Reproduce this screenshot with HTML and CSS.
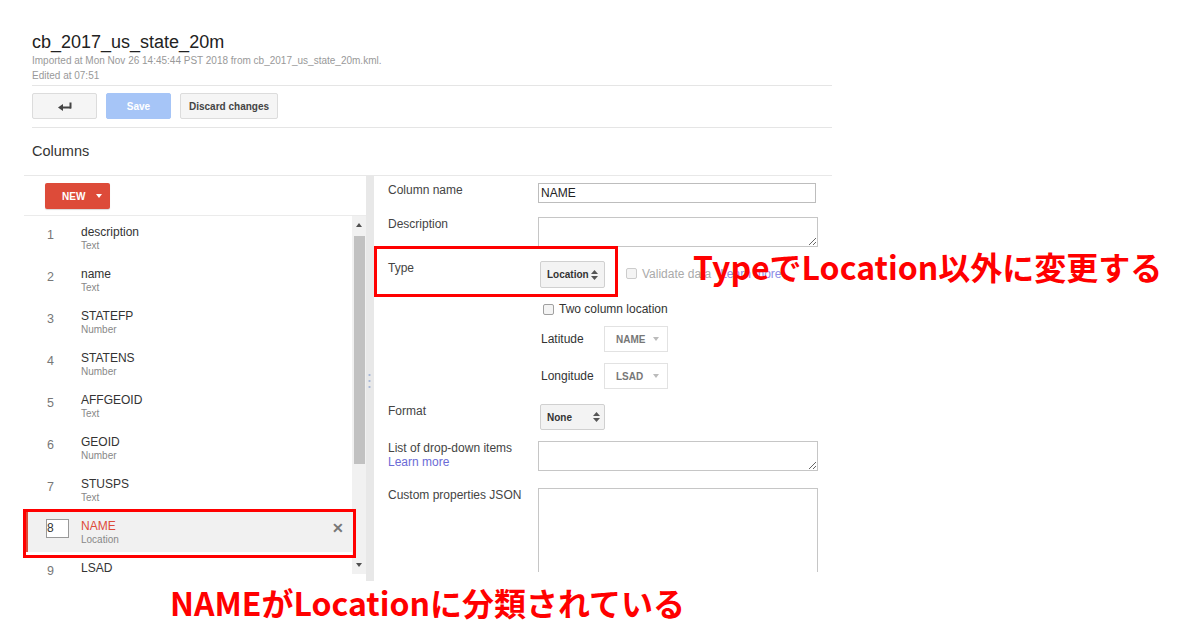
FILE: index.html
```html
<!DOCTYPE html>
<html lang="en">
<head>
  <meta charset="UTF-8" />
  <title>cb_2017_us_state_20m - Columns</title>
  <link rel="stylesheet" href="styles.css">
</head>
<body>
  <div class="page">
    <div class="doc-head">
      <h1>cb_2017_us_state_20m</h1>
      <p class="meta">Imported at Mon Nov 26 14:45:44 PST 2018 from cb_2017_us_state_20m.kml.</p>
      <p class="meta">Edited at 07:51</p>
    </div>

    <div class="toolbar">
      <button class="btn back" title="Back">
        <svg width="14" height="10" viewBox="0 0 14 10">
          <path d="M0 6.5 L5 3 L5 10 Z" fill="#444"/>
          <rect x="4" y="5.5" width="9" height="2" fill="#444"/>
          <rect x="11.5" y="1.5" width="2" height="6" fill="#444"/>
        </svg>
      </button>
      <button class="btn save">Save</button>
      <button class="btn">Discard changes</button>
    </div>

    <div class="section-title">Columns</div>

    <div class="editor">
      <div class="col-list">
        <div class="list-top">
          <button class="new-btn">NEW <span class="caret"></span></button>
        </div>
        <div class="list-body">
          <ul class="rows">
            <li class="row"><span class="num">1</span><div class="info"><div class="name">description</div><div class="type">Text</div></div></li>
            <li class="row"><span class="num">2</span><div class="info"><div class="name">name</div><div class="type">Text</div></div></li>
            <li class="row"><span class="num">3</span><div class="info"><div class="name">STATEFP</div><div class="type">Number</div></div></li>
            <li class="row"><span class="num">4</span><div class="info"><div class="name">STATENS</div><div class="type">Number</div></div></li>
            <li class="row"><span class="num">5</span><div class="info"><div class="name">AFFGEOID</div><div class="type">Text</div></div></li>
            <li class="row"><span class="num">6</span><div class="info"><div class="name">GEOID</div><div class="type">Number</div></div></li>
            <li class="row"><span class="num">7</span><div class="info"><div class="name">STUSPS</div><div class="type">Text</div></div></li>
            <li class="row active">
              <span class="num"><span class="num-box">8</span></span>
              <div class="info"><div class="name">NAME</div><div class="type">Location</div></div>
              <span class="remove">&#x2715;</span>
            </li>
            <li class="row"><span class="num">9</span><div class="info"><div class="name">LSAD</div></div></li>
          </ul>
          <div class="scrollbar">
            <span class="arrow up"></span>
            <div class="thumb"></div>
            <span class="arrow down"></span>
          </div>
        </div>
      </div>

      <div class="splitter"><span class="grip"></span></div>

      <div class="col-form">
        <div class="field f-name">
          <label class="field-label">Column name</label>
          <input class="text-input" type="text" value="NAME" />
        </div>
        <div class="field f-desc">
          <label class="field-label">Description</label>
          <textarea class="area"></textarea>
        </div>
        <div class="field f-type">
          <label class="field-label">Type</label>
          <div class="control-line">
            <span class="select">Location
              <svg width="7" height="10" viewBox="0 0 7 10"><path d="M0 4 L3.5 0 L7 4 Z M0 6 L3.5 10 L7 6 Z" fill="#555"/></svg>
            </span>
            <span class="check disabled"><span class="box"></span>Validate data</span>
            <a class="link" href="#">Learn more</a>
          </div>
        </div>
        <div class="field f-two">
          <span class="field-label"></span>
          <span class="check"><span class="box"></span>Two column location</span>
        </div>
        <div class="field f-lat">
          <span class="field-label"></span>
          <div class="sub-field">
            <span class="sub-label">Latitude</span>
            <span class="dropdown">NAME <span class="tri"></span></span>
          </div>
        </div>
        <div class="field f-lng">
          <span class="field-label"></span>
          <div class="sub-field">
            <span class="sub-label">Longitude</span>
            <span class="dropdown">LSAD <span class="tri"></span></span>
          </div>
        </div>
        <div class="field f-format">
          <label class="field-label">Format</label>
          <span class="select">None
            <svg width="7" height="10" viewBox="0 0 7 10"><path d="M0 4 L3.5 0 L7 4 Z M0 6 L3.5 10 L7 6 Z" fill="#555"/></svg>
          </span>
        </div>
        <div class="field f-list">
          <div class="field-label">List of drop-down items<br><a class="link" href="#">Learn more</a></div>
          <textarea class="area"></textarea>
        </div>
        <div class="field f-json">
          <label class="field-label">Custom properties JSON</label>
          <textarea class="area tall"></textarea>
        </div>
      </div>
    </div>

    <!-- annotations -->
    <div class="mark mark-row"></div>
    <div class="mark mark-type"></div>
    <div class="note note-type">TypeでLocation以外に変更する</div>
    <div class="note note-row">NAMEがLocationに分類されている</div>
  </div>
</body>
</html>
```

FILE: styles.css
```css
body {
  margin: 0;
  padding: 0;
  background: #fff;
  font-family: "Liberation Sans", Arial, sans-serif;
  color: #333;
}

.page {
  position: relative;
  padding-left: 24px;
  height: 637px;
  overflow: hidden;
}

/* header */
.doc-head {
  width: 800px;
  margin-left: 8px;
  padding-top: 31px;
  padding-bottom: 2px;
  border-bottom: 1px solid #e5e5e5;
}

h1 {
  margin: 0;
  font-size: 18px;
  font-weight: normal;
  line-height: 22px;
  color: #222;
}

.meta {
  margin: 0;
  font-size: 10px;
  line-height: 15px;
  color: #999;
}

.toolbar {
  width: 800px;
  margin-left: 8px;
  padding: 7px 0 8px;
  display: flex;
  gap: 9px;
  border-bottom: 1px solid #e5e5e5;
}

.btn {
  height: 26px;
  padding: 0 8px;
  border: 1px solid #dcdcdc;
  border-radius: 2px;
  background: #f5f5f5;
  color: #444;
  font-family: "Liberation Sans", Arial, sans-serif;
  font-size: 10px;
  font-weight: bold;
  cursor: pointer;
}

.btn.back {
  width: 65px;
  display: flex;
  align-items: center;
  justify-content: center;
}

.btn.save {
  width: 65px;
  background: #a6c5f7;
  border-color: #a6c5f7;
  color: #fff;
}

.section-title {
  margin-left: 8px;
  height: 47px;
  line-height: 47px;
  font-size: 14.5px;
  color: #333;
}

/* editor */
.editor {
  display: flex;
  width: 808px;
  height: 405px;
  border-top: 1px solid #e8e8e8;
}

.col-list {
  width: 342px;
}

.list-top {
  height: 40px;
  padding-left: 21px;
  padding-top: 7px;
  box-sizing: border-box;
  border-bottom: 1px solid #ebebeb;
}

.new-btn {
  width: 65px;
  height: 26px;
  padding: 0 0 0 17px;
  border: none;
  border-radius: 2px;
  background: #dd4b39;
  color: #fff;
  font-family: "Liberation Sans", Arial, sans-serif;
  font-size: 10px;
  font-weight: bold;
  box-shadow: 0 1px 1px rgba(0, 0, 0, 0.15);
  display: flex;
  align-items: center;
}

.new-btn .caret {
  margin-left: 11px;
  width: 0;
  height: 0;
  border-left: 3.5px solid transparent;
  border-right: 3.5px solid transparent;
  border-top: 4px solid #fff;
}

.list-body {
  display: flex;
  height: 362px;
  overflow: hidden;
}

.rows {
  list-style: none;
  margin: 0;
  padding: 0;
  width: 328px;
}

.row {
  display: flex;
  height: 42px;
  padding-top: 9px;
  box-sizing: border-box;
  position: relative;
}

.num {
  width: 34px;
  padding-left: 23px;
  padding-top: 3px;
  font-size: 12.5px;
  color: #777;
}

.name {
  font-size: 12px;
  line-height: 14px;
  color: #333;
}

.type {
  font-size: 10px;
  line-height: 14px;
  color: #888;
}

.row.active {
  background: #f1f1f1;
  box-shadow: inset 4px 0 #dd4b39;
}

.row.active .name {
  color: #dd4b39;
}

.row.active .num {
  padding-top: 0;
}

.num-box {
  display: inline-block;
  width: 21px;
  height: 17px;
  margin-left: -1px;
  border: 1px solid #999;
  background: #fff;
  font-size: 12px;
  line-height: 17px;
  color: #333;
}

.remove {
  position: absolute;
  right: 8px;
  top: 10px;
  font-size: 14px;
  font-weight: bold;
  color: #777;
}

.scrollbar {
  width: 14px;
  height: 358px;
  background: #f1f1f1;
  display: flex;
  flex-direction: column;
  align-items: center;
}

.scrollbar .arrow {
  width: 0;
  height: 0;
  border-left: 3.5px solid transparent;
  border-right: 3.5px solid transparent;
}

.scrollbar .up {
  margin-top: 7px;
  border-bottom: 4px solid #505050;
}

.scrollbar .down {
  margin-top: 99px;
  border-top: 4px solid #505050;
}

.scrollbar .thumb {
  width: 11px;
  height: 228px;
  margin-top: 9px;
  background: #c1c1c1;
}

.splitter {
  width: 8px;
  background: #e8e8e8;
  position: relative;
}

.splitter .grip {
  position: absolute;
  left: 2px;
  top: 196px;
  width: 3px;
  height: 16px;
  background-image: radial-gradient(circle, #a8b8d8 1px, transparent 1.2px);
  background-size: 3px 6px;
}

/* form */
.col-form {
  width: 444px;
  padding: 7px 0 0 14px;
  height: 396px;
  box-sizing: border-box;
  overflow: hidden;
}

.field {
  display: flex;
  align-items: flex-start;
}

.field-label {
  width: 150px;
  flex-shrink: 0;
  font-size: 12px;
  line-height: 14px;
  color: #444;
}

.text-input {
  width: 278px;
  height: 20px;
  box-sizing: border-box;
  margin: 0;
  padding: 1px 2px;
  border: 1px solid #bdbdbd;
  font-family: "Liberation Sans", Arial, sans-serif;
  font-size: 12px;
  color: #222;
}

.area {
  width: 280px;
  height: 30px;
  box-sizing: border-box;
  margin: 0;
  border: 1px solid #c6c6c6;
  font-family: "Liberation Sans", Arial, sans-serif;
}

.area.tall {
  height: 110px;
}

.f-name { margin-bottom: 14px; }
.f-desc { margin-bottom: 14px; }
.f-type { margin-bottom: 13px; }
.f-two { margin-bottom: 9px; }
.f-lat { margin-bottom: 11px; }
.f-lng { margin-bottom: 15px; }
.f-format { margin-bottom: 11px; }
.f-list { margin-bottom: 17px; }

.control-line {
  display: flex;
  align-items: center;
}

.select {
  display: inline-flex;
  align-items: center;
  justify-content: space-between;
  width: 65px;
  height: 27px;
  margin-left: 2px;
  padding: 0 6px;
  box-sizing: border-box;
  border: 1px solid #d0d0d0;
  border-radius: 2px;
  background: #f3f3f3;
  font-size: 10px;
  font-weight: bold;
  color: #333;
}

.f-format .select {
  height: 26px;
  padding-right: 4px;
}

.check {
  display: inline-flex;
  align-items: center;
  font-size: 12px;
  color: #333;
}

.check .box {
  width: 9px;
  height: 9px;
  margin-right: 5px;
  border: 1px solid #a0a0a0;
  border-radius: 2px;
  background: #f4f4f4;
}

.f-two .check {
  margin-left: 5px;
  line-height: 16px;
}

.check.disabled {
  margin-left: 21px;
  margin-top: -2px;
  color: #aaa;
}

.check.disabled .box {
  border-color: #ccc;
}

.f-type .link {
  margin-left: 9px;
  margin-top: -2px;
  color: #8c8ce6;
}

.link {
  font-size: 12px;
  color: #6b6bd6;
  text-decoration: none;
}

.sub-field {
  display: flex;
  align-items: center;
  margin-left: 3px;
}

.sub-label {
  width: 63px;
  font-size: 12px;
  color: #333;
}

.dropdown {
  display: inline-flex;
  align-items: center;
  width: 64px;
  height: 26px;
  box-sizing: border-box;
  padding-left: 11px;
  border: 1px solid #e2e2e2;
  font-size: 10px;
  font-weight: bold;
  color: #777;
}

.dropdown .tri {
  margin-left: auto;
  margin-right: 8px;
  width: 0;
  height: 0;
  border-left: 3.5px solid transparent;
  border-right: 3.5px solid transparent;
  border-top: 4px solid #bbb;
}

/* annotations laid over the screenshot */
.mark {
  position: absolute;
  border: 3px solid #ff0000;
  box-sizing: border-box;
}

.mark-row {
  left: 23px;
  top: 509px;
  width: 333px;
  height: 49px;
}

.mark-type {
  left: 374px;
  top: 246px;
  width: 244px;
  height: 51px;
}

.note {
  position: absolute;
  font-family: "Noto Sans CJK JP", sans-serif;
  font-size: 32px;
  font-weight: bold;
  line-height: 1;
  color: #ff0000;
  white-space: nowrap;
}

.note-type {
  left: 693px;
  top: 250px;
}

.note-row {
  left: 170px;
  top: 586px;
}
```
